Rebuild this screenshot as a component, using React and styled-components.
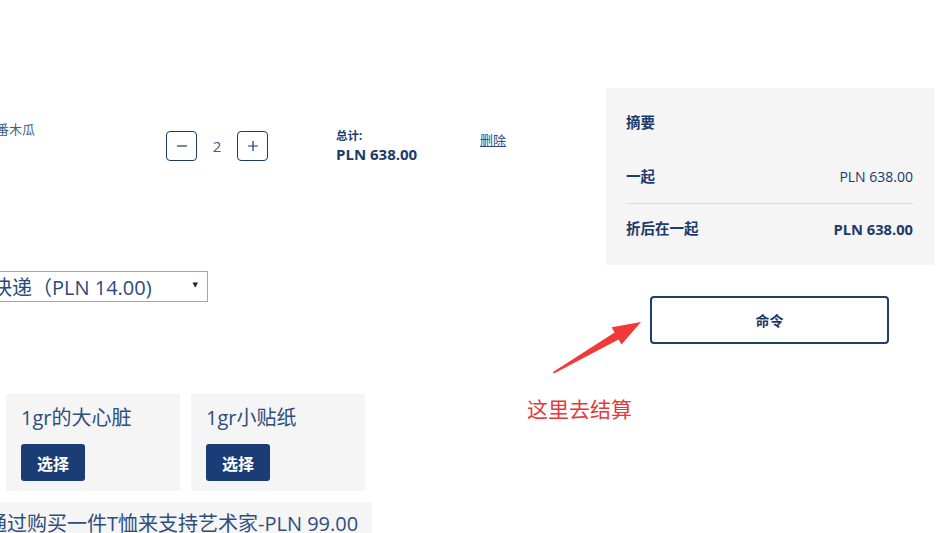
import React from "react";
import styled, { createGlobalStyle } from "styled-components";

const GlobalStyle = createGlobalStyle`
  html, body {
    margin: 0;
    padding: 0;
    background: #ffffff;
    overflow: hidden;
  }
  body {
    font-family: "Open Sans", "Noto Sans CJK SC", sans-serif;
    color: #1c3a6b;
  }
`;

const Page = styled.div`
  position: relative;
  width: 947px;
  height: 533px;
  overflow: hidden;
  display: flex;
  gap: 20px;
  padding-top: 88px;
  box-sizing: border-box;
`;

const LeftColumn = styled.div`
  margin-left: -20px;
  width: 606px;
  flex-shrink: 0;
  padding-top: 32px;
  display: flex;
  flex-direction: column;
`;

const CartRow = styled.div`
  display: grid;
  grid-template-columns: 186px 170px 144px auto;
  height: 50px;
  align-items: start;
`;

const Cell = styled.div`
  padding-top: ${(p) => p.$top || 0}px;
`;

const ProductName = styled.div`
  font-size: 13px;
  line-height: 18px;
  color: #3e5c8c;
  padding-left: 16px;
`;

const Qty = styled.div`
  display: flex;
  align-items: center;
`;

const QtyButton = styled.button`
  width: 31px;
  height: 30px;
  box-sizing: border-box;
  border: 1px solid #1c3a6b;
  border-radius: 4px;
  background: #fff;
  padding: 0;
  display: flex;
  align-items: center;
  justify-content: center;
`;

const QtyValue = styled.span`
  width: 40px;
  text-align: center;
  font-size: 15px;
  color: #3e5c8c;
`;

const TotalLabel = styled.div`
  font-size: 11.5px;
  font-weight: 700;
  line-height: 16px;
  color: #1c3a6b;
`;

const TotalValue = styled.div`
  font-size: 15px;
  font-weight: 700;
  line-height: 20px;
  color: #1c3a6b;
`;

const DeleteLink = styled.a`
  font-size: 13px;
  line-height: 18px;
  color: #2d4d80;
  text-decoration: underline;
`;

const SelectBox = styled.div`
  margin-top: 107px;
  width: 228px;
  height: 31px;
  box-sizing: border-box;
  border: 1px solid #a6a6a6;
  display: flex;
  align-items: center;
  justify-content: space-between;
  padding: 0 9px 0 11px;
  font-size: 20px;
  color: #2a4a7c;
  background: #fff;
`;

const Caret = styled.span`
  font-size: 7px;
  color: #222;
  font-family: "DejaVu Sans", sans-serif;
  margin-top: -3px;
`;

const CardRow = styled.div`
  margin-top: 92px;
  padding-left: 26px;
  display: flex;
  gap: 11px;
`;

const Card = styled.div`
  width: 174px;
  height: 97px;
  box-sizing: border-box;
  background: #f5f5f5;
  padding: 11px 15px 10px;
  display: flex;
  flex-direction: column;
  justify-content: space-between;
`;

const CardTitle = styled.div`
  font-size: 20px;
  line-height: 26px;
  color: #2f4e7e;
  white-space: nowrap;
`;

const SelectButton = styled.button`
  width: 64px;
  height: 37px;
  border: none;
  border-radius: 3px;
  background: #1a3d75;
  color: #fff;
  font-family: "Noto Sans CJK SC", sans-serif;
  font-size: 16px;
  font-weight: 700;
  padding: 0;
`;

const PromoBox = styled.div`
  margin-top: 11px;
  width: 392px;
  height: 50px;
  box-sizing: border-box;
  background: #f5f5f5;
  padding: 8px 0 0 7px;
  font-size: 20px;
  line-height: 28px;
  color: #2f4e7e;
  white-space: nowrap;
`;

const RightColumn = styled.div`
  width: 328px;
  flex-shrink: 0;
  display: flex;
  flex-direction: column;
`;

const Summary = styled.div`
  background: #f5f5f5;
  padding: 25px 21px 11px 20px;
`;

const SummaryTitle = styled.div`
  font-size: 14.5px;
  font-weight: 700;
  line-height: 20px;
  color: #1c3a6b;
  margin-bottom: 18px;
`;

const SummaryRow = styled.div`
  display: flex;
  justify-content: space-between;
  align-items: center;
  padding: ${(p) => (p.$last ? "15px 0" : "16px 0")};
  border-bottom: ${(p) => (p.$last ? "none" : "1px solid #dcdcdc")};
  font-size: ${(p) => (p.$bold ? "14.7px" : "14px")};
  font-weight: ${(p) => (p.$bold ? 700 : 400)};
  line-height: 20px;
  color: #1c3a6b;
`;

const RowLabel = styled.span`
  font-size: 14.5px;
  font-weight: 700;
`;

const OrderButton = styled.button`
  margin: 31px 45px 0 44px;
  height: 48px;
  border: 2px solid #1c3f6e;
  border-radius: 4px;
  background: #fff;
  color: #1c3a6b;
  font-family: "Noto Sans CJK SC", sans-serif;
  font-size: 14px;
  font-weight: 700;
`;

const Annotation = styled.div`
  position: absolute;
  left: 527px;
  top: 394px;
  font-family: "Noto Sans CJK SC", sans-serif;
  font-size: 21px;
  line-height: 28px;
  color: #e8373a;
`;

const ArrowSvg = styled.svg`
  position: absolute;
  left: 548px;
  top: 318px;
`;

const Minus = () => (
  <svg width="14" height="14" viewBox="0 0 14 14">
    <path d="M2 7h10" stroke="#1c3a6b" strokeWidth="1.2" />
  </svg>
);

const Plus = () => (
  <svg width="14" height="14" viewBox="0 0 14 14">
    <path d="M2 7h10M7 2v10" stroke="#1c3a6b" strokeWidth="1.2" />
  </svg>
);

const App = () => {
  return (
    <Page>
      <GlobalStyle />
      <LeftColumn>
        <CartRow>
          <ProductName>番木瓜</ProductName>
          <Cell $top={11}>
            <Qty>
              <QtyButton>
                <Minus />
              </QtyButton>
              <QtyValue>2</QtyValue>
              <QtyButton>
                <Plus />
              </QtyButton>
            </Qty>
          </Cell>
          <Cell $top={8}>
            <TotalLabel>总计:</TotalLabel>
            <TotalValue>PLN 638.00</TotalValue>
          </Cell>
          <Cell $top={8}>
            <DeleteLink>删除</DeleteLink>
          </Cell>
        </CartRow>

        <SelectBox>
          <span>快递（PLN 14.00)</span>
          <Caret>▼</Caret>
        </SelectBox>

        <CardRow>
          <Card>
            <CardTitle>1gr的大心脏</CardTitle>
            <SelectButton>选择</SelectButton>
          </Card>
          <Card>
            <CardTitle>1gr小贴纸</CardTitle>
            <SelectButton>选择</SelectButton>
          </Card>
        </CardRow>

        <PromoBox>通过购买一件T恤来支持艺术家-PLN 99.00</PromoBox>
      </LeftColumn>

      <RightColumn>
        <Summary>
          <SummaryTitle>摘要</SummaryTitle>
          <SummaryRow>
            <RowLabel>一起</RowLabel>
            <span>PLN 638.00</span>
          </SummaryRow>
          <SummaryRow $last $bold>
            <RowLabel>折后在一起</RowLabel>
            <span>PLN 638.00</span>
          </SummaryRow>
        </Summary>
        <OrderButton>命令</OrderButton>
      </RightColumn>

      <ArrowSvg width="100" height="60" viewBox="0 0 100 60">
        <polygon
          points="5,54 66.6,14.4 63.7,9.2 93,4 73.5,26.6 70.6,21.4 6,55.5"
          fill="#f03a3a"
        />
      </ArrowSvg>
      <Annotation>这里去结算</Annotation>
    </Page>
  );
};

export default App;
